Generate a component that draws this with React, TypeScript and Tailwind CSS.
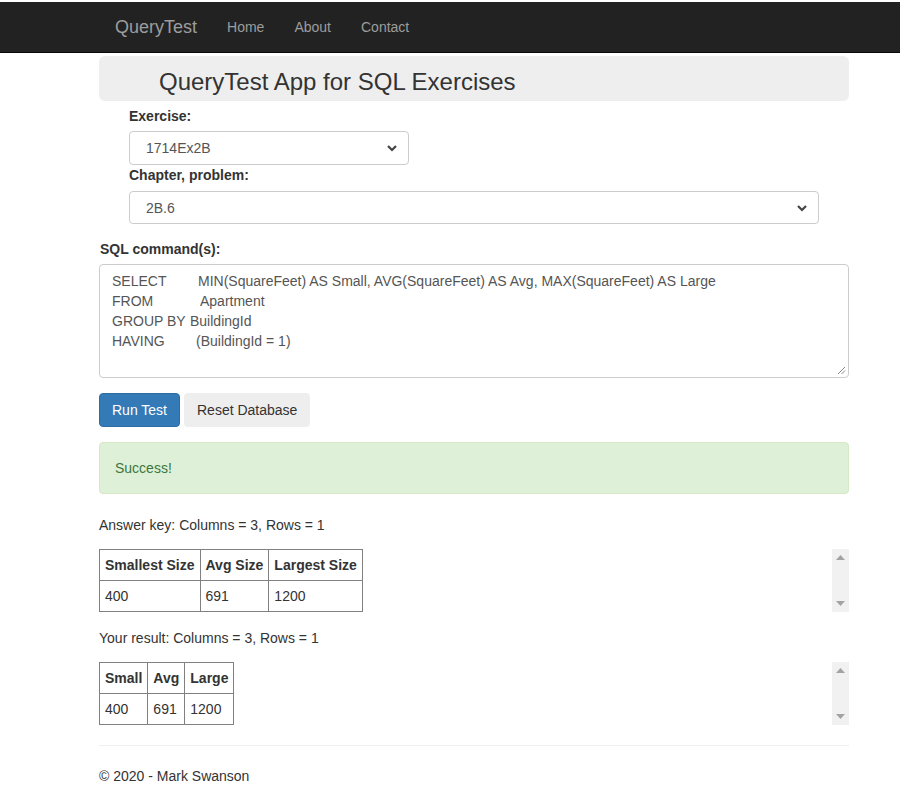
import React from 'react';

const sqlLines = [
   ['SELECT', 'MIN(SquareFeet) AS Small, AVG(SquareFeet) AS Avg, MAX(SquareFeet) AS Large', 'w-[86px]'],
   ['FROM', 'Apartment', 'w-[88px]'],
   ['GROUP BY', 'BuildingId', 'w-[78px]'],
   ['HAVING', '(BuildingId = 1)', 'w-[84px]'],
];

const Chevron: React.FC = () => (
   <svg width="12" height="8" viewBox="0 0 12 8" className="shrink-0">
      <path d="M2 2 L6 6 L10 2" fill="none" stroke="#444" strokeWidth="2.2" />
   </svg>
);

const FakeScrollbar: React.FC = () => (
   <div className="w-[17px] bg-[#f1f1f1] flex flex-col items-center justify-between py-[6px]">
      <svg width="9" height="5" viewBox="0 0 9 5"><path d="M0 5 L4.5 0 L9 5 Z" fill="#a3a3a3" /></svg>
      <svg width="9" height="5" viewBox="0 0 9 5"><path d="M0 0 L4.5 5 L9 0 Z" fill="#a3a3a3" /></svg>
   </div>
);

const ResultTable: React.FC<{ headers: string[]; row: string[] }> = ({ headers, row }) => (
   <div className="flex justify-between">
      <table className="border-collapse border border-[#808080]">
         <thead>
            <tr>
               {headers.map((h) => (
                  <th key={h} className="border border-[#808080] px-[5px] py-[5px] text-left font-bold leading-5">{h}</th>
               ))}
            </tr>
         </thead>
         <tbody>
            <tr>
               {row.map((c, i) => (
                  <td key={i} className="border border-[#808080] px-[5px] py-[5px] leading-5">{c}</td>
               ))}
            </tr>
         </tbody>
      </table>
      <FakeScrollbar />
   </div>
);

const App: React.FC = () => {
   return (
      <div className="min-h-screen bg-white text-[14px] leading-5 text-[#333] font-['Liberation_Sans',Arial,sans-serif] pt-[2px]">
         {/* navbar */}
         <nav className="h-[51px] bg-[#222] border-b border-[#080808]">
            <div className="ml-[100px] flex items-center h-[50px]">
               <span className="px-[15px] text-[18px] text-[#9d9d9d]">QueryTest</span>
               <a className="px-[15px] text-[#9d9d9d]">Home</a>
               <a className="px-[15px] text-[#9d9d9d]">About</a>
               <a className="px-[15px] text-[#9d9d9d]">Contact</a>
            </div>
         </nav>

         <main className="ml-[99px] w-[750px] pt-[3px]">
            <div className="h-[45px] bg-[#eee] rounded-[6px] pl-[60px] pt-[6px] flex items-center">
               <h1 className="text-[24px] leading-[30px] text-[#333]">QueryTest App for SQL Exercises</h1>
            </div>

            <div className="pl-[30px] pt-[5px]">
               <label className="block font-bold leading-5 mb-[5px]">Exercise:</label>
               <div className="w-[280px] h-[34px] border border-[#ccc] rounded-[4px] flex items-center justify-between pl-[16px] pr-[10px] text-[#555]">
                  <span>1714Ex2B</span>
                  <Chevron />
               </div>
               <label className="block font-bold leading-5 mb-[6px]">Chapter, problem:</label>
               <div className="w-[690px] h-[33px] border border-[#ccc] rounded-[4px] flex items-center justify-between pl-[16px] pr-[10px] text-[#555]">
                  <span>2B.6</span>
                  <Chevron />
               </div>
            </div>

            <label className="block font-bold leading-5 mt-[15px] mb-[5px] pl-[1px]">SQL command(s):</label>
            <div className="relative h-[114px] border border-[#ccc] rounded-[4px] px-[12px] pt-[6px] text-[#555]">
               {sqlLines.map(([k, v, w]) => (
                  <div key={k} className="flex leading-5 whitespace-pre">
                     <span className={w}>{k}</span>
                     <span>{v}</span>
                  </div>
               ))}
               <svg width="9" height="9" viewBox="0 0 9 9" className="absolute right-[2px] bottom-[2px]">
                  <path d="M8 1 L1 8 M8 4.5 L4.5 8" stroke="#888" strokeWidth="1" />
               </svg>
            </div>

            <div className="flex gap-[4px] mt-[15px]">
               <button className="h-[34px] px-[12px] bg-[#337ab7] border border-[#2e6da4] rounded-[4px] text-white">Run Test</button>
               <button className="h-[34px] px-[13px] bg-[#eee] rounded-[4px] text-[#333]">Reset Database</button>
            </div>

            <div className="mt-[15px] h-[52px] bg-[#dff0d8] border border-[#d6e9c6] rounded-[4px] px-[15px] flex items-center text-[#3c763d]">
               Success!
            </div>

            <p className="mt-[21px] mb-[14px]">Answer key: Columns = 3, Rows = 1</p>
            <ResultTable headers={['Smallest Size', 'Avg Size', 'Largest Size']} row={['400', '691', '1200']} />

            <p className="mt-[16px] mb-[14px]">Your result: Columns = 3, Rows = 1</p>
            <ResultTable headers={['Small', 'Avg', 'Large']} row={['400', '691', '1200']} />

            <hr className="mt-[20px] border-t border-[#eee]" />
            <footer className="pt-[20px]">
               <p>© 2020 - Mark Swanson</p>
            </footer>
         </main>
      </div>
   );
};

export default App;
